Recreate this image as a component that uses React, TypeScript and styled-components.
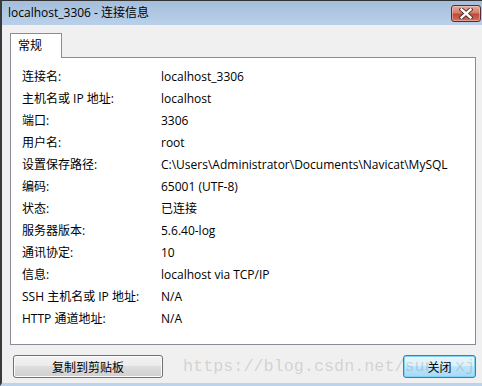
import React from 'react'
import styled, { createGlobalStyle } from 'styled-components'

const GlobalStyle = createGlobalStyle`
  html, body {
    margin: 0;
    padding: 0;
    background: #f0f0f0;
  }
  body {
    font-family: 'Open Sans', 'Noto Sans CJK SC', sans-serif;
    font-size: 12px;
    color: #000;
  }
`

const rows: [string, string][] = [
  ['连接名:', 'localhost_3306'],
  ['主机名或 IP 地址:', 'localhost'],
  ['端口:', '3306'],
  ['用户名:', 'root'],
  ['设置保存路径:', 'C:\\Users\\Administrator\\Documents\\Navicat\\MySQL'],
  ['编码:', '65001 (UTF-8)'],
  ['状态:', '已连接'],
  ['服务器版本:', '5.6.40-log'],
  ['通讯协定:', '10'],
  ['信息:', 'localhost via TCP/IP'],
  ['SSH 主机名或 IP 地址:', 'N/A'],
  ['HTTP 通道地址:', 'N/A'],
]

export default function App() {
  return (
    <>
      <GlobalStyle />
      <Window>
        <TitleBar>
          <Title>localhost_3306 - 连接信息</Title>
          <CloseBox>
            <svg width="14" height="11" viewBox="0 0 14 11">
              <path d="M2.5 1.5 L11.5 9.5 M11.5 1.5 L2.5 9.5" stroke="#4a2424" strokeWidth="4.2" strokeLinecap="square" />
              <path d="M2.5 1.5 L11.5 9.5 M11.5 1.5 L2.5 9.5" stroke="#ffffff" strokeWidth="2.4" strokeLinecap="square" />
            </svg>
          </CloseBox>
        </TitleBar>
        <Body>
          <TabStrip>
            <Tab>常规</Tab>
          </TabStrip>
          <Panel>
            {rows.map(([label, value]) => (
              <Row key={label}>
                <Label>{label}</Label>
                <Value>{value}</Value>
              </Row>
            ))}
          </Panel>
          <Footer>
            <Button style={{ width: 150 }}>复制到剪贴板</Button>
            <Button $primary style={{ width: 73 }}>关闭</Button>
          </Footer>
        </Body>
        <Watermark $left={181}>https://blog.csdn.net/sun</Watermark>
        <Watermark $left={453}>xj</Watermark>
      </Window>
    </>
  )
}

const Window = styled.div`
  position: relative;
  width: 482px;
  height: 386px;
  box-sizing: border-box;
  display: flex;
  flex-direction: column;
  border-left: 2px solid #3a3a3a;
  border-bottom: 3px solid #bdd3ec;
  overflow: hidden;
`

const TitleBar = styled.div`
  height: 24px;
  border-top: 1px solid #333;
  background: linear-gradient(#a4bedb, #bad0ea);
  display: flex;
  align-items: flex-start;
  padding-left: 6px;
`

const Title = styled.div`
  line-height: 24px;
  font-size: 12px;
  flex: 1;
`

const CloseBox = styled.div`
  margin-top: 4px;
  margin-right: 1px;
  width: 30px;
  height: 17px;
  box-sizing: border-box;
  border: 1px solid #5b2b2b;
  border-radius: 3px;
  background: linear-gradient(#e8a89a 0%, #d47e6c 45%, #c04a38 55%, #d0705c 100%);
  box-shadow: inset 0 0 0 1px rgba(255, 220, 210, 0.45);
  display: flex;
  align-items: center;
  justify-content: center;
`

const Body = styled.div`
  flex: 1;
  background: #f0f0f0;
  padding: 8px 6px 0 8px;
  display: flex;
  flex-direction: column;
`

const TabStrip = styled.div`
  display: flex;
  position: relative;
  z-index: 1;
`

const Tab = styled.div`
  width: 52px;
  height: 25px;
  box-sizing: border-box;
  border: 1px solid #898c95;
  border-bottom: none;
  background: #fff;
  padding-left: 7px;
  line-height: 23px;
  margin-bottom: -1px;
`

const Panel = styled.div`
  height: 288px;
  box-sizing: border-box;
  border: 1px solid #898c95;
  background: #fff;
  padding: 8px 0 0 11px;
`

const Row = styled.div`
  display: flex;
  height: 22px;
  line-height: 22px;
  white-space: nowrap;
`

const Label = styled.div`
  width: 139px;
  flex-shrink: 0;
`

const Value = styled.div``

const Footer = styled.div`
  display: flex;
  justify-content: space-between;
  margin-top: 10px;
  padding-left: 3px;
`

const Button = styled.div<{ $primary?: boolean }>`
  height: 23px;
  box-sizing: border-box;
  border: 1px solid ${(p) => (p.$primary ? '#3c7fb1' : '#707070')};
  border-radius: 3px;
  background: ${(p) =>
    p.$primary
      ? 'linear-gradient(#eaf6fd 0%, #d9f0fc 50%, #bee6fd 50%, #a7d9f5 100%)'
      : 'linear-gradient(#f2f2f2 0%, #ebebeb 50%, #dddddd 50%, #cfcfcf 100%)'};
  box-shadow: inset 0 0 0 1px ${(p) => (p.$primary ? '#7fd3f7' : '#fcfcfc')};
  display: flex;
  align-items: center;
  justify-content: center;
`

const Watermark = styled.div<{ $left: number }>`
  position: absolute;
  left: ${(p) => p.$left}px;
  top: 358px;
  font-family: 'Liberation Mono', monospace;
  font-size: 16.8px;
  line-height: 17px;
  white-space: pre;
  color: rgba(110, 110, 110, 0.24);
  pointer-events: none;
`
